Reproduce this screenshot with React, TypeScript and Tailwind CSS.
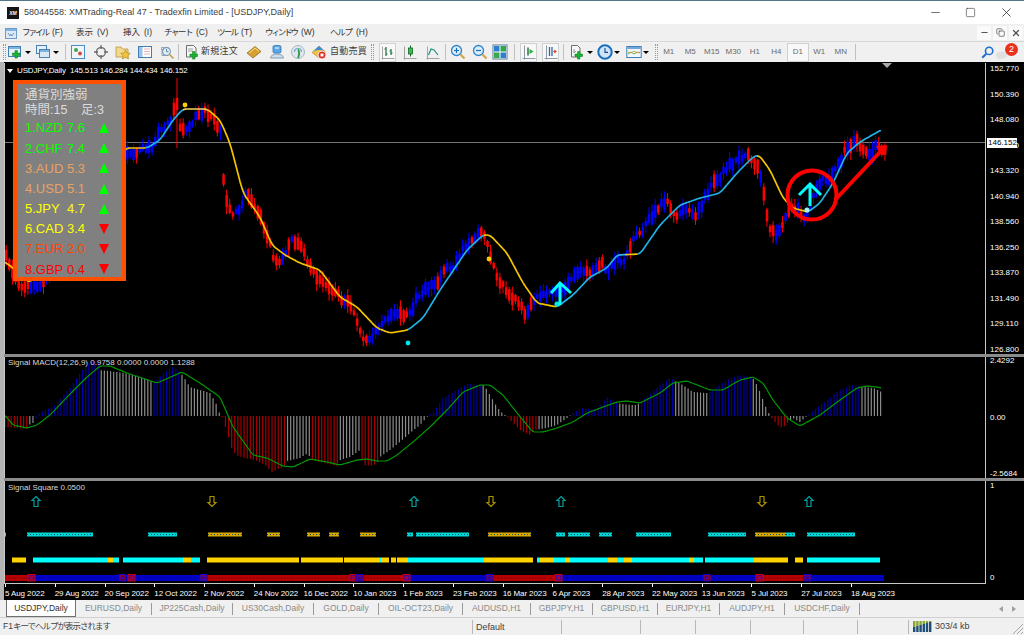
import { Copy, Minus, Square, X } from 'lucide-react';
import type { ReactNode } from 'react';

type Pt = [number, number];

const STEP = 3.105;

function interp(knots: Pt[], x: number) {
  if (x <= knots[0][0]) return knots[0][1];
  for (let i = 1; i < knots.length; i++) {
    if (x <= knots[i][0]) {
      const [x0, y0] = knots[i - 1];
      const [x1, y1] = knots[i];
      return y0 + ((y1 - y0) * (x - x0)) / (x1 - x0);
    }
  }
  return knots[knots.length - 1][1];
}

function rng(seed: number) {
  let s = seed;
  return () => {
    s = (s * 16807) % 2147483647;
    return s / 2147483647;
  };
}

const pricePath: Pt[] = [
  [5, 258], [12, 272], [20, 288], [40, 283], [60, 250], [126, 152], [140, 150], [150, 148], [160, 128], [170, 118],
  [175, 100], [178, 125], [185, 130], [190, 122], [197, 115], [205, 110], [212, 120], [220, 130], [223, 195], [230, 212],
  [240, 210], [246, 190], [252, 205], [258, 215], [265, 235], [272, 255], [280, 265], [290, 240], [300, 245], [310, 270],
  [320, 280], [330, 290], [340, 298], [350, 305], [360, 335], [368, 340], [375, 330], [385, 320], [395, 315], [408, 315],
  [415, 300], [425, 290], [435, 285], [445, 270], [455, 262], [465, 245], [475, 235], [483, 232], [490, 262], [497, 280],
  [505, 290], [515, 300], [525, 315], [532, 300], [540, 295], [550, 295], [560, 290], [570, 280], [580, 270], [590, 272],
  [600, 262], [605, 270], [615, 262], [625, 258], [635, 235], [645, 225], [655, 210], [665, 200], [675, 218], [685, 210],
  [695, 215], [705, 195], [715, 180], [725, 170], [735, 160], [745, 155], [752, 160], [758, 170], [762, 190], [767, 225],
  [775, 232], [782, 225], [790, 205], [797, 210], [805, 218], [812, 195], [820, 178], [828, 180], [835, 170], [845, 148],
  [855, 142], [863, 148], [870, 155], [875, 143], [882, 150], [886, 148],
];

const maPath: Pt[] = [
  [5, 262], [13, 268], [30, 283], [60, 240], [100, 170], [127, 148], [147, 148], [160, 140], [173, 120], [183, 109],
  [207, 109], [220, 120], [230, 143], [243, 193], [260, 217], [272, 245], [285, 255], [300, 263], [320, 270], [340, 297],
  [357, 307], [377, 328], [390, 333], [408, 330], [423, 318], [440, 290], [467, 250], [483, 235], [490, 235], [507, 253],
  [523, 283], [537, 303], [557, 307], [573, 295], [590, 277], [607, 268], [617, 255], [640, 254], [660, 225], [680, 205],
  [700, 198], [720, 193], [737, 173], [753, 157], [759, 155], [770, 170], [783, 198], [793, 208], [808, 212], [820, 203],
  [833, 183], [847, 153], [860, 142], [881, 130],
];

const maColors: [number, number, string][] = [
  [5, 145, '#f5c400'], [145, 183, '#1fb2e6'], [183, 207, '#f5d85a'], [207, 408, '#f5c400'], [408, 484, '#1fb2e6'],
  [484, 557, '#f5c400'], [557, 625, '#1fb2e6'], [625, 637, '#f5c400'], [637, 757, '#1fb2e6'], [757, 808, '#f5c400'],
  [808, 881, '#1fb2e6'],
];

const macdTop: Pt[] = [
  [5, 427], [27, 429], [29, 425], [35, 422], [37, 416], [40, 413], [55, 405], [70, 388], [80, 373], [90, 362], [99, 360],
  [100, 370], [125, 373], [150, 380], [153, 383], [165, 372], [173, 367], [180, 372], [183, 376], [190, 387], [200, 390],
  [210, 393], [218, 407], [220, 416], [222, 416], [228, 435], [231, 447], [236, 455], [245, 458], [255, 460], [265, 465],
  [272, 472], [285, 466], [287, 461], [300, 458], [308, 453], [311, 460], [338, 466], [340, 460], [350, 457], [360, 450],
  [363, 465], [373, 466], [378, 462], [380, 457], [390, 450], [400, 442], [410, 433], [420, 425], [428, 416], [433, 413],
  [443, 398], [457, 390], [467, 384], [480, 385], [484, 385], [490, 395], [497, 407], [503, 414], [507, 416], [510, 420],
  [520, 430], [530, 435], [535, 430], [547, 428], [557, 425], [567, 418], [573, 413], [583, 408], [597, 410], [607, 397],
  [617, 403], [630, 405], [637, 405], [643, 400], [657, 388], [670, 378], [677, 382], [683, 385], [693, 392], [708, 393],
  [727, 380], [740, 375], [752, 377], [757, 385], [760, 392], [763, 400], [767, 410], [772, 418], [777, 425], [783, 428],
  [788, 422], [793, 418], [800, 422], [807, 416], [810, 413], [827, 400], [840, 390], [853, 385], [863, 387], [873, 388],
  [882, 392],
];

const macdColors: [number, number, string][] = [
  [5, 28, '#a80000'], [28, 36, '#8c8c8c'], [36, 99, '#0000a8'], [99, 152, '#8c8c8c'], [152, 181, '#0000a8'],
  [181, 221, '#8c8c8c'], [221, 286, '#a80000'], [286, 310, '#8c8c8c'], [310, 339, '#a80000'], [339, 361, '#8c8c8c'],
  [361, 379, '#a80000'], [379, 430, '#8c8c8c'], [430, 482, '#0000a8'], [482, 505, '#8c8c8c'], [505, 536, '#a80000'],
  [536, 571, '#8c8c8c'], [571, 619, '#0000a8'], [619, 640, '#8c8c8c'], [640, 675, '#0000a8'], [675, 709, '#8c8c8c'],
  [709, 752, '#0000a8'], [752, 769, '#8c8c8c'], [769, 789, '#a80000'], [789, 808, '#8c8c8c'], [808, 859, '#0000a8'],
  [859, 885, '#8c8c8c'],
];

const signalLine: Pt[] = [
  [5, 415], [13, 425], [27, 428], [37, 425], [50, 415], [72, 392], [87, 377], [100, 366], [110, 366], [127, 373],
  [157, 383], [182, 372], [200, 383], [220, 397], [233, 427], [253, 455], [267, 458], [283, 466], [293, 467], [310, 459],
  [327, 462], [340, 465], [357, 460], [367, 459], [377, 461], [387, 461], [397, 455], [413, 442], [430, 427], [447, 410],
  [463, 392], [480, 385], [490, 385], [503, 395], [517, 413], [533, 432], [543, 432], [557, 428], [573, 422], [587, 413],
  [603, 407], [617, 402], [627, 401], [640, 403], [660, 393], [673, 383], [687, 381], [710, 390], [723, 390], [740, 380],
  [753, 377], [763, 383], [773, 400], [787, 418], [800, 426], [820, 415], [840, 400], [857, 388], [867, 386], [877, 387],
  [881, 388],
];

const YEL = '#ffd200';
const CYA = '#00ffff';

const dotRow: [number, number, string][] = [
  [4, 6, YEL], [27, 93, CYA], [148, 177, CYA], [208, 242, YEL], [267, 280, YEL], [307, 320, YEL], [329, 339, YEL],
  [360, 376, YEL], [407, 413, CYA], [416, 469, CYA], [488, 531, YEL], [556, 565, CYA], [568, 590, CYA], [599, 612, CYA],
  [636, 671, CYA], [708, 746, CYA], [755, 786, YEL], [786, 795, CYA], [807, 855, CYA],
];

const solidRow: [number, number, string][] = [
  [12, 26, YEL], [33, 108, CYA], [108, 113, YEL], [113, 119, CYA], [123, 183, CYA], [183, 191, YEL], [191, 200, CYA],
  [207, 299, YEL], [301, 343, YEL], [344, 380, YEL], [380, 381, CYA], [381, 389, YEL], [391, 396, YEL], [397, 408, YEL],
  [408, 484, CYA], [484, 533, YEL], [537, 540, CYA], [540, 554, YEL], [554, 565, CYA], [565, 570, YEL], [570, 608, CYA],
  [608, 617, YEL], [617, 624, CYA], [624, 632, YEL], [632, 689, CYA], [689, 694, YEL], [694, 703, CYA], [705, 754, CYA],
  [754, 788, YEL], [795, 803, YEL], [807, 880, CYA],
];

const RED = '#b80000';
const BLU = '#0000c8';
const trendRow: [number, number, string][] = [
  [5, 31, RED], [31, 200, BLU], [200, 350, RED], [350, 356, BLU], [356, 403, RED], [403, 486, BLU], [486, 555, RED],
  [555, 703, BLU], [703, 711, RED], [711, 756, BLU], [756, 808, RED], [808, 884, BLU],
];
const flipBoxes = [28, 119, 128, 200, 350, 356, 403, 486, 555, 703, 756, 804];

function MainChart() {
  const rand = rng(4711);
  const candles: ReactNode[] = [];
  for (let x = 5; x < 886; x += STEP) {
    const mid = interp(pricePath, x) + (rand() - 0.5) * 6;
    const half = 2 + rand() * 5;
    const top = mid - half;
    const bottom = mid + half;
    let hi = top - rand() * 6 - 1;
    let lo = bottom + rand() * 6 + 1;
    if (Math.abs(x - 177) < 1.6) {
      hi = 78;
      lo = 148;
    }
    if (Math.abs(x - 365) < 1.6) lo = 346;
    const rising = interp(pricePath, x + 5) < interp(pricePath, x - 5);
    const flip = rand() < 0.14;
    const color = rising !== flip ? '#0000ff' : '#ff0000';
    candles.push(
      <g key={x}>
        <line x1={x + 1.2} x2={x + 1.2} y1={hi} y2={lo} stroke={color} strokeWidth="1" />
        <rect x={x} y={top} width="2.5" height={bottom - top} fill={color} />
      </g>,
    );
  }

  const smooth = (x: number) => {
    let s = 0;
    for (let d = -3; d <= 3; d++) s += interp(maPath, x + d);
    return s / 7;
  };

  return (
    <svg width="980" height="291" viewBox="5 63 980 291" className="block">
      <line x1="5" x2="985" y1="142.5" y2="142.5" stroke="#777777" />
      {candles}
      {maColors.map(([a, b, c]) => {
        const pts: string[] = [];
        for (let x = a; x <= b; x++) pts.push(`${x},${smooth(x).toFixed(1)}`);
        return <polyline key={a} points={pts.join(' ')} fill="none" stroke={c} strokeWidth="1.7" strokeLinejoin="round" />;
      })}
      <polygon points="882,63 892,63 887,68" fill="#a8a8a8" />
      <circle cx="185" cy="105" r="2.4" fill="#ffc800" />
      <circle cx="489" cy="259" r="2.4" fill="#ffc800" />
      <circle cx="408" cy="343" r="2.4" fill="#00e6e6" />
      <circle cx="557" cy="304" r="2.6" fill="#00e6e6" />
      <circle cx="807" cy="210" r="2.6" fill="#a0f0f0" />
      <g fill="none" stroke="#00ffff" strokeWidth="3">
        <path d="M560 305V284M551 293L560 283L571 293" />
        <path d="M810 206V186M799 195L810 184L821 195" />
      </g>
      <circle cx="812" cy="195" r="24.5" fill="none" stroke="#ff0000" strokeWidth="4" />
      <path d="M835 200L881 151" fill="none" stroke="#ff0000" strokeWidth="4" />
      <polygon points="876,146 887,145 886,155 881,155" fill="#ff0000" />
    </svg>
  );
}

function MacdChart() {
  const bars: ReactNode[] = [];
  for (let x = 5; x < 882; x += STEP) {
    const seg = macdColors.find(([a, b]) => x >= a && x < b);
    bars.push(<line key={x} x1={x} x2={x} y1="416" y2={interp(macdTop, x)} stroke={seg ? seg[2] : '#8c8c8c'} strokeWidth="1.2" />);
  }
  const pts: string[] = [];
  for (let x = 5; x <= 881; x += 1) {
    let s = 0;
    for (let d = -2; d <= 2; d++) s += interp(signalLine, x + d);
    pts.push(`${x},${(s / 5).toFixed(1)}`);
  }
  return (
    <svg width="980" height="121" viewBox="5 357 980 121" className="block">
      {bars}
      <polyline points={pts.join(' ')} fill="none" stroke="#009a00" strokeWidth="1.2" />
    </svg>
  );
}

function HollowArrow({ x, up }: { x: number; up: boolean }) {
  const path = 'M0 -5L4 -1H2V5H-2V-1H-4Z';
  return (
    <path
      d={path}
      transform={`translate(${x} 501.5) ${up ? '' : 'rotate(180)'}`}
      fill="none"
      stroke={up ? '#00a0a0' : '#a89000'}
      strokeWidth="1.2"
    />
  );
}

function SquareChart() {
  return (
    <svg width="980" height="103" viewBox="5 481 980 103" className="block">
      {[36, 414, 561, 809].map((x) => <HollowArrow key={x} x={x} up />)}
      {[212, 491, 762].map((x) => <HollowArrow key={x} x={x} up={false} />)}
      {dotRow.map(([a, b, c]) => (
        <g key={a}>
          <rect x={a} y="532.5" width={b - a} height="4" fill={c === YEL ? '#d8a800' : '#00d8d8'} />
          <line x1={a} x2={b} y1="534.5" y2="534.5" stroke="#005060" strokeWidth="1" strokeDasharray="1 2" />
        </g>
      ))}
      {solidRow.map(([a, b, c]) => <rect key={a} x={a} y="557.5" width={b - a} height="5" fill={c} />)}
      {trendRow.map(([a, b, c]) => <rect key={a} x={a} y="575" width={b - a} height="6" fill={c} />)}
      <line x1="5" x2="884" y1="578" y2="578" stroke="#000000" strokeOpacity="0.55" strokeWidth="1" strokeDasharray="1 2.1" />
      {flipBoxes.map((x, i) => (
        <g key={x} fill="none" stroke={i % 2 ? '#0000e0' : '#e00000'} strokeWidth="0.9">
          <rect x={x} y="574.5" width="7" height="6.5" fill={i % 2 ? '#800040' : '#500090'} />
          <path d={`M${x + 2} 576L${x + 5} 580M${x + 5} 576L${x + 2} 580`} />
        </g>
      ))}
    </svg>
  );
}

function Ico({ children }: { children: ReactNode }) {
  return <svg viewBox="0 0 16 16" className="w-4 h-4 block shrink-0">{children}</svg>;
}

const Plus = ({ x = 8, y = 8 }: { x?: number; y?: number }) => (
  <path d={`M${x + 2} ${y}h2.4v2.6H${x + 7}V${y + 5}h-2.6v2.6H${x + 2}V${y + 5}h-2.6V${y + 2.6}H${x + 2}Z`} fill="#16b52e" stroke="#0a7a1a" strokeWidth="0.5" />
);

const Win = () => (
  <g>
    <rect x="1.5" y="2.5" width="12" height="10" fill="#e4f0fb" stroke="#3f7fb5" />
    <rect x="2" y="3" width="11" height="2" fill="#7fb3e0" />
  </g>
);

const icons: Record<string, ReactNode> = {
  newChart: <Ico><Win /><Plus x={6} y={6.5} /></Ico>,
  profiles: (
    <Ico>
      <rect x="1.5" y="1.5" width="10" height="8" fill="#e4f0fb" stroke="#4a80ad" />
      <rect x="4.5" y="5.5" width="10" height="8" fill="#d8e8f6" stroke="#4a80ad" />
      <rect x="5" y="6" width="9" height="2" fill="#7fb3e0" />
    </Ico>
  ),
  market: (
    <Ico>
      <rect x="1.5" y="1.5" width="13" height="13" fill="#eef5fb" stroke="#4a90c8" />
      <circle cx="6" cy="6" r="2" fill="#3aa648" />
      <circle cx="10" cy="9.5" r="2" fill="#d84a3a" />
    </Ico>
  ),
  cross: (
    <Ico>
      <circle cx="8" cy="8" r="4.5" fill="none" stroke="#6b6b6b" strokeWidth="1.3" />
      <path d="M8 1v4M8 11v4M1 8h4M11 8h4" stroke="#6b6b6b" strokeWidth="1.3" />
    </Ico>
  ),
  folder: (
    <Ico>
      <path d="M1 3h5l1.5 2H13v8H1Z" fill="#f3d98b" stroke="#b9963c" strokeWidth="0.8" />
      <path d="M10.5 6l1.5 3 3.3.4-2.4 2.3.6 3.3-3-1.6-3 1.6.6-3.3-2.4-2.3 3.3-.4Z" fill="#f2c33a" stroke="#a88420" strokeWidth="0.6" />
    </Ico>
  ),
  nav: (
    <Ico>
      <rect x="1.5" y="2.5" width="13" height="11" fill="#fff" stroke="#3f7fb5" />
      <rect x="2" y="3" width="3.5" height="10" fill="#9cc4e6" />
      <path d="M7 5h6M7 7.5h6M7 10h6" stroke="#e8a0a0" strokeWidth="0.8" />
    </Ico>
  ),
  clockGlass: (
    <Ico>
      <path d="M2.5 3.5h7v2h-7ZM3 5.5h6v6H3Z" fill="#eaf2f9" stroke="#7c93a8" strokeWidth="0.8" />
      <circle cx="7.5" cy="7.5" r="4" fill="#dfeefb" stroke="#6e8aa3" />
      <path d="M7.5 5v2.7h2" stroke="#4a6a86" fill="none" strokeWidth="0.8" />
      <path d="M10.5 10.5l4 4" stroke="#c69b3a" strokeWidth="1.6" />
    </Ico>
  ),
  order: (
    <Ico>
      <path d="M2.5 1.5h7l2.5 2.5v9h-9.5Z" fill="#f7f7f7" stroke="#6f6f6f" />
      <path d="M4 5h5M4 7h5" stroke="#8a8a8a" strokeWidth="0.8" />
      <Plus x={6.5} y={7.5} />
    </Ico>
  ),
  gold: (
    <Ico>
      <path d="M1 9L9 2.5l6 5L7 14Z" fill="#d8a030" stroke="#8a6414" strokeWidth="0.7" />
      <path d="M3 9l6-5 4 3.4" fill="none" stroke="#f5dc8c" strokeWidth="1" />
    </Ico>
  ),
  people: (
    <Ico>
      <path d="M1.5 14a6.5 4 0 0 1 13 0Z" fill="#cfdcea" stroke="#6d8aa8" strokeWidth="0.8" />
      <rect x="4" y="1.5" width="8" height="7.5" rx="1.5" fill="#5aa8e8" stroke="#2f74b2" strokeWidth="0.8" />
      <path d="M6 4h4" stroke="#fff" />
    </Ico>
  ),
  signal: (
    <Ico>
      <circle cx="8" cy="8" r="6.5" fill="#dfe8ee" stroke="#a7b8c4" />
      <path d="M4.5 8a3.5 3.5 0 0 1 7 0" fill="none" stroke="#6fa8c8" strokeWidth="1.2" />
      <path d="M8 5.5c1.4 1 1.4 6 0 8.5" stroke="#3c9a4c" strokeWidth="2" fill="none" />
    </Ico>
  ),
  auto: (
    <Ico>
      <path d="M1 8.5L8 2l7 6.5L8 14Z" fill="#f0c040" stroke="#a88420" strokeWidth="0.6" />
      <path d="M1.5 8L8 2l6 5.5c-3-2-9-2-12.5.5Z" fill="#3c8fd8" />
      <circle cx="11" cy="11" r="4" fill="#e02a20" stroke="#fff" strokeWidth="0.8" />
      <rect x="9.5" y="9.5" width="3" height="3" fill="#fff" />
    </Ico>
  ),
  bars: (
    <Ico>
      <path d="M1.5 14.5h13M2.5 15.5v-13" stroke="#9a9a9a" strokeWidth="0.9" />
      <path d="M6 3v9M4.5 5H6M6 10h1.5M11 5v6M9.5 7H11M11 9h1.5" stroke="#1d6e3c" strokeWidth="1.2" fill="none" />
    </Ico>
  ),
  candle: (
    <Ico>
      <path d="M1.5 14.5h13M2.5 15.5v-13" stroke="#9a9a9a" strokeWidth="0.9" />
      <path d="M8.5 1.5v11" stroke="#1d5e2c" />
      <rect x="6.5" y="4" width="4" height="6" fill="#2ec44a" stroke="#14632a" strokeWidth="0.8" />
    </Ico>
  ),
  line: (
    <Ico>
      <path d="M1.5 14.5h13M2.5 15.5v-13" stroke="#9a9a9a" strokeWidth="0.9" />
      <path d="M3.5 11L6 5l3 1 4 5" fill="none" stroke="#1f8f78" strokeWidth="1.2" />
    </Ico>
  ),
  zoomIn: (
    <Ico>
      <circle cx="6.5" cy="6.5" r="5" fill="#d9eefc" stroke="#2f86c8" strokeWidth="1.3" />
      <path d="M4 6.5h5M6.5 4v5" stroke="#1f6fb0" strokeWidth="1.2" />
      <path d="M10.5 10.5l4 4" stroke="#d6a23a" strokeWidth="2" />
    </Ico>
  ),
  zoomOut: (
    <Ico>
      <circle cx="6.5" cy="6.5" r="5" fill="#d9eefc" stroke="#2f86c8" strokeWidth="1.3" />
      <path d="M4 6.5h5" stroke="#1f6fb0" strokeWidth="1.2" />
      <path d="M10.5 10.5l4 4" stroke="#d6a23a" strokeWidth="2" />
    </Ico>
  ),
  tile: (
    <Ico>
      <rect x="1" y="1" width="14" height="14" fill="#fff" stroke="#5a7a98" />
      <rect x="2" y="2" width="5.5" height="5.5" fill="#2f7fd0" />
      <rect x="8.5" y="2" width="5.5" height="5.5" fill="#2fa84a" />
      <rect x="2" y="8.5" width="5.5" height="5.5" fill="#3aa84e" />
      <rect x="8.5" y="8.5" width="5.5" height="5.5" fill="#2f7fd0" />
    </Ico>
  ),
  scroll: (
    <Ico>
      <path d="M1.5 14.5h13M3.5 15.5v-14" stroke="#7f8f9f" strokeWidth="0.9" />
      <path d="M7 3.5v8" stroke="#1d6e3c" strokeWidth="1.4" />
      <path d="M8.5 5l4 2.5-4 2.5Z" fill="#1eb33c" />
    </Ico>
  ),
  shift: (
    <Ico>
      <path d="M1.5 14.5h13M3.5 15.5v-14" stroke="#7f8f9f" strokeWidth="0.9" />
      <path d="M6.5 3v9M9 3v9" stroke="#2a6aa8" strokeWidth="1.3" />
      <path d="M10 7.5h3M11.5 6l2 1.5-2 1.5Z" fill="#e0482a" stroke="#e0482a" strokeWidth="0.7" />
    </Ico>
  ),
  indicators: (
    <Ico>
      <path d="M2.5 1.5h6l2.5 2.5v9h-8.5Z" fill="#f7f7f7" stroke="#6f6f6f" />
      <path d="M5 5v4l2-2" stroke="#7f7f7f" fill="none" strokeWidth="0.8" />
      <Plus x={6.5} y={7.5} />
    </Ico>
  ),
  period: (
    <Ico>
      <circle cx="8" cy="8" r="6.7" fill="#cfe4f6" stroke="#1a6fbd" strokeWidth="2" />
      <path d="M8 4v4.4h3" stroke="#124c84" fill="none" strokeWidth="1.1" />
    </Ico>
  ),
  template: (
    <Ico>
      <rect x="0.8" y="2.5" width="14.4" height="11" fill="#f2f8fc" stroke="#3f7fb5" />
      <rect x="1.2" y="3" width="13.6" height="2" fill="#6fa8da" />
      <path d="M2 10l3-2 3 2 3-2 3 1" stroke="#49a84e" fill="none" strokeWidth="0.9" />
      <path d="M2 8l3 1 3-2 3 2 3-1" stroke="#d89a30" fill="none" strokeWidth="0.9" />
    </Ico>
  ),
};

const Caret = ({ w = 'w-[10px]' }: { w?: string }) => (
  <div className={`${w} flex justify-center`}>
    <div className="w-0 h-0 border-x-[3px] border-x-transparent border-t-[3px] border-t-black" />
  </div>
);

const Sep = ({ className = '' }: { className?: string }) => <div className={`w-px h-[16px] bg-[#c0c0c0] ${className}`} />;

const Grip = ({ className = '' }: { className?: string }) => (
  <div className={`w-[3px] h-[16px] border-x border-dotted border-[#9a9a9a] ${className}`} />
);

function Btn({ icon, className = 'w-[16px]', active }: { icon: string; className?: string; active?: boolean }) {
  return (
    <div className={`h-[19px] flex items-center justify-center shrink-0 ${active ? 'bg-[#f8f8f8] border border-[#d0d0d0]' : ''} ${className}`}>
      {icons[icon]}
    </div>
  );
}

const periods = ['M1', 'M5', 'M15', 'M30', 'H1', 'H4', 'D1', 'W1', 'MN'];

function Toolbar() {
  return (
    <div className="h-[21px] flex items-center bg-[#f0f0f0] border-t border-[#d8d8d8] pl-[3px] text-[#3a3a3a]">
      <Grip className="mr-[1px]" />
      <Btn icon="newChart" />
      <Caret />
      <Btn icon="profiles" className="w-[16px] ml-[2px]" />
      <Caret />
      <Sep className="ml-[4px]" />
      <Btn icon="market" className="w-[24px]" />
      <Btn icon="cross" className="w-[22px]" />
      <Btn icon="folder" className="w-[22px]" />
      <Btn icon="nav" className="w-[22px]" />
      <Btn icon="clockGlass" className="w-[22px]" />
      <Sep />
      <Btn icon="order" className="w-[16px] ml-[5px]" />
      <div className="w-[39px] pl-[1px] text-[9px] tracking-[0.25px] whitespace-nowrap">新規注文</div>
      <Btn icon="gold" className="w-[30px]" />
      <Btn icon="people" className="w-[16px]" />
      <Btn icon="signal" className="w-[26px]" />
      <Btn icon="auto" className="w-[16px]" />
      <div className="w-[37px] ml-[3px] text-[9px] tracking-[0.25px] whitespace-nowrap">自動売買</div>
      <Grip className="ml-[4px]" />
      <Btn icon="bars" className="w-[17px] ml-[5px]" active />
      <Btn icon="candle" className="w-[28px]" />
      <Btn icon="line" className="w-[17px]" />
      <Sep className="ml-[4px]" />
      <Btn icon="zoomIn" className="w-[24px]" />
      <Btn icon="zoomOut" className="w-[20px]" />
      <Btn icon="tile" className="w-[20px]" />
      <Sep className="ml-[4px]" />
      <Btn icon="scroll" className="w-[17px] ml-[5px]" active />
      <Btn icon="shift" className="w-[17px] ml-[5px]" active />
      <Sep className="ml-[4px]" />
      <Btn icon="indicators" className="w-[16px] ml-[5px]" />
      <Caret w="w-[9px]" />
      <Btn icon="period" className="w-[16px] ml-[3px]" />
      <Caret w="w-[8px]" />
      <Btn icon="template" className="w-[16px] ml-[5px]" />
      <Caret w="w-[8px]" />
      <Grip className="ml-[5px]" />
      {periods.map((p) => (
        <div
          key={p}
          className={`w-[21.5px] h-[19px] flex items-center justify-center text-[8px] text-[#6a6a6a] ${p === 'D1' ? 'bg-[#f8f8f8] border border-[#d0d0d0]' : ''}`}
        >
          {p}
        </div>
      ))}
      <Sep className="ml-[3px]" />
      <div className="ml-auto flex items-center pr-[5px]">
        <svg viewBox="0 0 16 16" className="w-[13px] h-[13px]">
          <circle cx="10" cy="6" r="4.5" fill="none" stroke="#1f6fd0" strokeWidth="2" />
          <path d="M6.5 9.5L1.5 14.5" stroke="#1f6fd0" strokeWidth="2.5" />
        </svg>
        <div className="relative w-[24px] h-[18px] ml-[1px]">
          <svg viewBox="0 0 16 12" className="absolute left-0 bottom-0 w-[13px] h-[10px]">
            <ellipse cx="8" cy="5" rx="7" ry="4.5" fill="#e0e0e0" />
            <path d="M4 8l-2 3 5-2Z" fill="#e0e0e0" />
          </svg>
          <div className="absolute right-[1px] top-0 w-[13px] h-[13px] rounded-full bg-[#e8301c] text-white text-[9px] leading-[13px] text-center">2</div>
        </div>
      </div>
    </div>
  );
}

const menus: [string, string, string, string][] = [
  ['ファイル', '(F)', 'w-[54px]', 'tracking-[-2px]'],
  ['表示', '(V)', 'w-[47px]', ''],
  ['挿入', '(I)', 'w-[41px]', ''],
  ['チャート', '(C)', 'w-[53px]', 'tracking-[-1.5px]'],
  ['ツール', '(T)', 'w-[48px]', 'tracking-[-1.8px]'],
  ['ウィンドウ', '(W)', 'w-[65px]', 'tracking-[-2.1px]'],
  ['ヘルプ', '(H)', 'w-[50px]', 'tracking-[-1.2px]'],
];

function MenuBar() {
  return (
    <div className="h-[17px] flex items-center bg-[#f0f0f0] pl-[5px] text-[8.5px] text-[#303030]">
      <svg viewBox="0 0 12 12" className="w-[12px] h-[12px] mr-[5px]">
        <rect x="0.5" y="1.5" width="11" height="10" fill="#dbe9f7" stroke="#6c9cc8" />
        <rect x="1" y="2" width="10" height="2" fill="#7fb3e0" />
        <path d="M3 6l2 3 1-2 1 2 2-3" fill="none" stroke="#5a8ab5" strokeWidth="0.8" />
      </svg>
      {menus.map(([label, key, w, tr]) => (
        <div key={label} className={`${w} whitespace-nowrap flex items-center`}>
          <span className={tr}>{label}</span>
          <span className="ml-[4px]">{key}</span>
        </div>
      ))}
      <div className="ml-auto flex items-center h-full gap-[2px] pr-[1px] text-[#555]">
        <div className="w-[14px] h-[14px] bg-[#fafafa] flex items-center justify-center"><Minus size={9} strokeWidth={3} /></div>
        <div className="w-[14px] h-[14px] bg-[#fafafa] flex items-center justify-center"><Copy size={9} strokeWidth={2} /></div>
        <div className="w-[14px] h-[14px] bg-[#fafafa] flex items-center justify-center"><X size={10} strokeWidth={3} /></div>
      </div>
    </div>
  );
}

function TitleBar() {
  return (
    <div className="h-[24px] flex items-center bg-white border-t border-[#56748a] pl-[7px] text-[9px] text-[#404040]">
      <div className="w-[12px] h-[12px] bg-[#151515] text-white text-[5px] font-bold italic leading-[12px] text-center mr-[5px]">XM</div>
      <span>58044558: XMTrading-Real 47 - Tradexfin Limited - [USDJPY,Daily]</span>
      <div className="ml-auto flex items-center text-[#222]">
        <div className="w-[35px] flex justify-center"><Minus size={13} strokeWidth={1.2} /></div>
        <div className="w-[35px] flex justify-center"><Square size={11} strokeWidth={1.2} /></div>
        <div className="w-[36px] flex justify-center"><X size={15} strokeWidth={1.2} /></div>
      </div>
    </div>
  );
}

const strength = [
  { name: '1.NZD', val: '7.6', color: 'text-[#00ff00]', up: true },
  { name: '2.CHF', val: '7.4', color: 'text-[#00ff00]', up: true },
  { name: '3.AUD', val: '5.3', color: 'text-[#eaa263]', up: true },
  { name: '4.USD', val: '5.1', color: 'text-[#eaa263]', up: true },
  { name: '5.JPY', val: '4.7', color: 'text-[#ffff00]', up: true },
  { name: '6.CAD', val: '3.4', color: 'text-[#ffff00]', up: false },
  { name: '7.EUR', val: '2.0', color: 'text-[#ff4500]', up: false },
  { name: '8.GBP', val: '0.4', color: 'text-[#ff0000]', up: false },
];

function StrengthPanel() {
  return (
    <div className="absolute left-[8px] top-[17px] w-[113px] h-[201px] bg-[#808080] border-[4px] border-[#ff5000] pl-[8px] pt-[3px]">
      <div className="text-[12.5px] leading-[16px] text-[#dcdcdc]">通貨別強弱</div>
      <div className="text-[12.5px] leading-[15px] text-[#dcdcdc] flex">
        <span className="w-[56px]">時間:15</span>
        <span>足:3</span>
      </div>
      {strength.map((s) => (
        <div key={s.name} className={`h-[20.2px] flex items-center text-[13px] ${s.color}`}>
          <span className="w-[42px]">{s.name}</span>
          <span className="w-[32px]">{s.val}</span>
          <div className={`w-0 h-0 border-x-[5.5px] border-x-transparent ${s.up ? 'border-b-[10px] border-b-[#00ff00]' : 'border-t-[10px] border-t-[#ff0000]'}`} />
        </div>
      ))}
    </div>
  );
}

function Scale({ labels, className }: { labels: string[]; className: string }) {
  return (
    <div className={`w-[39px] h-full flex flex-col justify-between border-l border-[#c8c8c8] pl-[4px] text-[8px] leading-[8px] text-white ${className}`}>
      {labels.map((l, i) => <div key={i}>{l}</div>)}
    </div>
  );
}

const priceLabels = ['152.770', '150.390', '148.080', '145.700', '143.320', '140.940', '138.560', '136.250', '133.870', '131.490', '129.110', '126.800'];
const dates = ['5 Aug 2022', '29 Aug 2022', '20 Sep 2022', '12 Oct 2022', '2 Nov 2022', '24 Nov 2022', '16 Dec 2022', '10 Jan 2023', '1 Feb 2023', '23 Feb 2023', '16 Mar 2023', '6 Apr 2023', '28 Apr 2023', '22 May 2023', '13 Jun 2023', '5 Jul 2023', '27 Jul 2023', '18 Aug 2023'];

function Charts() {
  return (
    <div className="h-[538px] bg-black border-l-[4px] border-l-[#b4b4b4] flex flex-col">
      <div className="h-[292px] flex relative border-t border-black">
        <div className="w-[981px] border-l border-[#c8c8c8] relative overflow-hidden">
          <MainChart />
          <div className="absolute left-[2px] top-[2px] flex items-center text-[8px] leading-[11px] text-white whitespace-nowrap">
            <div className="w-0 h-0 border-x-[3px] border-x-transparent border-t-[4px] border-t-white mr-[4px]" />
            <span className="tracking-[-0.15px]">USDJPY,Daily&nbsp;&nbsp;145.513 146.284 144.434 146.152</span>
          </div>
          <StrengthPanel />
        </div>
        <Scale labels={priceLabels} className="pt-[2px]" />
        <div className="absolute left-[983px] top-[75px] w-[30px] h-[10px] bg-white text-black text-[8px] leading-[10px] pl-[1px]">146.152</div>
      </div>
      <div className="h-[3px] bg-[#8c8c8c]" />
      <div className="h-[121px] flex">
        <div className="w-[981px] border-l border-[#c8c8c8] relative overflow-hidden">
          <MacdChart />
          <div className="absolute left-[3px] top-[0px] text-[8px] leading-[11px] text-[#d8d8d8] whitespace-nowrap">Signal MACD(12,26,9) 0.9758 0.0000 0.0000 1.1288</div>
        </div>
        <Scale labels={['2.4292', '0.00', '-2.5684']} className="" />
      </div>
      <div className="h-[3px] bg-[#8c8c8c]" />
      <div className="h-[103px] flex">
        <div className="w-[981px] border-l border-b border-[#c8c8c8] relative overflow-hidden">
          <SquareChart />
          <div className="absolute left-[3px] top-[1px] text-[8px] leading-[11px] text-[#d8d8d8]">Signal Square 0.0500</div>
        </div>
        <Scale labels={['1', '0']} className="pt-[1px] pb-[2px]" />
      </div>
      <div className="h-[16px] flex text-[8px] leading-[10px] text-white pl-[1px]">
        {dates.map((d) => (
          <div key={d} className="w-[49.78px] shrink-0">
            <div className="w-px h-[3px] bg-white" />
            <div className="whitespace-nowrap mt-[2px] tracking-[-0.1px]">{d}</div>
          </div>
        ))}
      </div>
    </div>
  );
}

const tabs: [string, string][] = [
  ['EURUSD,Daily', 'w-[76px]'],
  ['JP225Cash,Daily', 'w-[81px]'],
  ['US30Cash,Daily', 'w-[81px]'],
  ['GOLD,Daily', 'w-[65px]'],
  ['OIL-OCT23,Daily', 'w-[84px]'],
  ['AUDUSD,H1', 'w-[68px]'],
  ['GBPJPY,H1', 'w-[62px]'],
  ['GBPUSD,H1', 'w-[65px]'],
  ['EURJPY,H1', 'w-[62px]'],
  ['AUDJPY,H1', 'w-[65px]'],
  ['USDCHF,Daily', 'w-[75px]'],
];

function TabBar() {
  return (
    <div className="h-[17px] flex items-center bg-[#f0f0f0] pl-[6px] text-[8.5px] text-[#8a8a8a]">
      <div className="w-[70px] h-[17px] bg-white border-x border-b border-[#707070] text-[#303030] flex items-center justify-center">USDJPY,Daily</div>
      {tabs.map(([label, w]) => (
        <div key={label} className={`${w} h-[12px] flex items-center justify-center border-r border-[#9a9a9a] whitespace-nowrap`}>{label}</div>
      ))}
      <div className="ml-auto flex items-center gap-[9px] pr-[8px]">
        <div className="w-0 h-0 border-y-[3px] border-y-transparent border-r-[4px] border-r-[#a0a0a0]" />
        <div className="w-0 h-0 border-y-[3px] border-y-transparent border-l-[4px] border-l-[#a0a0a0]" />
      </div>
    </div>
  );
}

function StatusBar() {
  const cells = ['w-[79px]', 'w-[55px]', 'w-[55px]', 'w-[53px]', 'w-[54px]', 'w-[51px]'];
  return (
    <div className="h-[18px] flex items-center bg-[#f0f0f0] border-t border-[#d0d0d0] pl-[3px] text-[9px] text-[#404040] relative">
      <div className="w-[469px] whitespace-nowrap text-[8.5px]">F1<span className="tracking-[-1px]">キーでヘルプが表示されます</span></div>
      <div className="w-[89px] h-[14px] border-l border-[#b8b8b8] pl-[3px] leading-[14px]">Default</div>
      {cells.map((w, i) => <div key={i} className={`${w} h-[14px] border-l border-[#b8b8b8]`} />)}
      <div className="h-[14px] border-l border-[#b8b8b8] pl-[4px] flex items-center gap-[3px]">
        <svg width="19" height="11" viewBox="0 0 19 11">
          {Array.from({ length: 6 }).map((_, i) => (
            <g key={i}>
              <rect x={i * 3.2} y="0" width="2.4" height={6 - i} fill="#8aa632" />
              <rect x={i * 3.2} y={6 - i} width="2.4" height={5 + i} fill="#1f4f78" />
            </g>
          ))}
        </svg>
        <span>303/4 kb</span>
      </div>
      <svg width="12" height="12" viewBox="0 0 12 12" className="absolute right-0 bottom-0">
        <path d="M11 1L1 11M11 5L5 11M11 9L9 11" stroke="#a8a8a8" strokeWidth="1" />
      </svg>
    </div>
  );
}

export default function App() {
  return (
    <div className="w-[1024px] h-[635px] overflow-hidden bg-[#f0f0f0] flex flex-col [font-family:'Liberation_Sans','Noto_Sans_CJK_JP',sans-serif]">
      <TitleBar />
      <MenuBar />
      <Toolbar />
      <Charts />
      <TabBar />
      <StatusBar />
    </div>
  );
}
